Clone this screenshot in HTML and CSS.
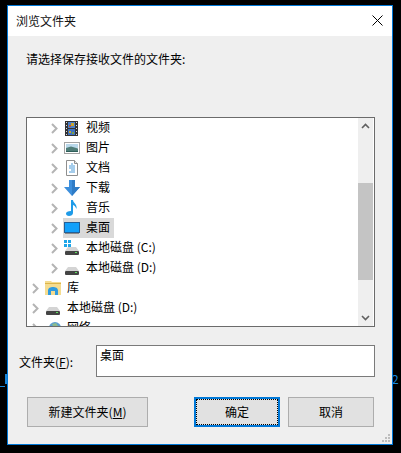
FILE: index.html
```html
<!DOCTYPE html>
<html lang="zh-CN">

<head>
    <meta charset="UTF-8">
    <title>浏览文件夹</title>
    <link rel="stylesheet" href="styles.css">
</head>

<body>
    <div class="edge-mark edge-left"></div>
    <div class="edge-mark edge-line"></div>
    <div class="edge-mark edge-right">2</div>

    <div class="dialog">
        <div class="titlebar">
            <span class="title">浏览文件夹</span>
            <svg class="close" width="11" height="11" viewBox="0 0 11 11">
                <path d="M0.5 0.5L10.5 10.5M10.5 0.5L0.5 10.5" stroke="#000" stroke-width="1" fill="none" />
            </svg>
        </div>

        <div class="content">
            <p class="prompt">请选择保存接收文件的文件夹:</p>

            <div class="tree-box">
                <div class="tree">
                    <div class="row indent">
                        <svg class="arrow" width="7" height="11" viewBox="0 0 7 11"><path d="M1 1L5.5 5.5L1 10" /></svg>
                        <svg class="icon" width="16" height="16" viewBox="0 0 16 16">
                            <rect x="1" y="1" width="13" height="15" fill="#333" />
                            <rect x="4" y="2" width="7" height="6" fill="#4a7fc8" />
                            <rect x="4" y="9" width="7" height="6" fill="#3f72c0" />
                            <rect x="7" y="3" width="3" height="3" fill="#c9a52f" />
                            <rect x="5" y="5" width="2" height="2" fill="#b5573a" />
                            <rect x="5" y="11" width="2" height="2" fill="#c9a52f" />
                            <rect x="8" y="12" width="2" height="2" fill="#7ba04a" />
                            <path d="M2 2.5h1M2 5.5h1M2 8.5h1M2 11.5h1M2 14.5h1M12 2.5h1M12 5.5h1M12 8.5h1M12 11.5h1M12 14.5h1" stroke="#ddd" stroke-width="1" />
                        </svg>
                        <span>视频</span>
                    </div>
                    <div class="row indent">
                        <svg class="arrow" width="7" height="11" viewBox="0 0 7 11"><path d="M1 1L5.5 5.5L1 10" /></svg>
                        <svg class="icon" width="16" height="16" viewBox="0 0 16 16">
                            <rect x="0.5" y="2.5" width="15" height="11" fill="#fff" stroke="#a3a3a3" />
                            <rect x="2" y="4" width="12" height="4" fill="#b9d8ea" />
                            <path d="M2 8L7 6.5L14 8.5V12H2Z" fill="#4f7d78" />
                            <rect x="2" y="11" width="12" height="1" fill="#2f5f5a" />
                        </svg>
                        <span>图片</span>
                    </div>
                    <div class="row indent">
                        <svg class="arrow" width="7" height="11" viewBox="0 0 7 11"><path d="M1 1L5.5 5.5L1 10" /></svg>
                        <svg class="icon" width="16" height="16" viewBox="0 0 16 16">
                            <path d="M2.5 0.5H10.5L13.5 3.5V15.500H2.5Z" fill="#fff" stroke="#8f8f8f" />
                            <path d="M10.5 0.5V3.5H13.5" fill="#e6e6e6" stroke="#8f8f8f" />
                            <path d="M7 4h2M5 6h6M5 8h6M7 10h4M5 12h6" stroke="#4d9bd8" stroke-width="1" />
                        </svg>
                        <span>文档</span>
                    </div>
                    <div class="row indent">
                        <svg class="arrow" width="7" height="11" viewBox="0 0 7 11"><path d="M1 1L5.5 5.5L1 10" /></svg>
                        <svg class="icon" width="16" height="16" viewBox="0 0 16 16">
                            <path d="M5 0H11V7H16L8 16L0 7H5Z" fill="#3d8fdc" />
                            <path d="M8 0H11V7H16L8 16Z" fill="#2f7cc6" />
                        </svg>
                        <span>下载</span>
                    </div>
                    <div class="row indent">
                        <svg class="arrow" width="7" height="11" viewBox="0 0 7 11"><path d="M1 1L5.5 5.5L1 10" /></svg>
                        <svg class="icon" width="16" height="16" viewBox="0 0 16 16">
                            <path d="M7 0H9C9 3 13.5 4 12.5 9C11.5 6.5 10.5 5.5 9 5V13C9 15 7 16 5 16C3 16 2 15 2 13.5C2 12 4 11 7 11Z" fill="#1e9be8" />
                        </svg>
                        <span>音乐</span>
                    </div>
                    <div class="row indent">
                        <svg class="arrow" width="7" height="11" viewBox="0 0 7 11"><path d="M1 1L5.5 5.5L1 10" /></svg>
                        <div class="selected">
                            <svg class="icon" width="16" height="16" viewBox="0 0 16 16">
                                <rect x="0" y="2" width="16" height="11" fill="#235f96" />
                                <rect x="1" y="3" width="14" height="9" fill="#12a0fa" />
                                <rect x="1" y="13" width="14" height="1" fill="#8a8a8a" />
                            </svg>
                            <span>桌面</span>
                        </div>
                    </div>
                    <div class="row indent">
                        <svg class="arrow" width="7" height="11" viewBox="0 0 7 11"><path d="M1 1L5.5 5.5L1 10" /></svg>
                        <svg class="icon" width="16" height="16" viewBox="0 0 16 16">
                            <rect x="0" y="0" width="3" height="3" fill="#1ea5e8" />
                            <rect x="4" y="0" width="3" height="3" fill="#1ea5e8" />
                            <rect x="0" y="4" width="3" height="3" fill="#1ea5e8" />
                            <rect x="4" y="4" width="3" height="3" fill="#1ea5e8" />
                            <path d="M1 11L4 7H12L15 11Z" fill="#d4d4d4" />
                            <rect x="1" y="11" width="14" height="4" rx="1" fill="#444" />
                            <rect x="11" y="12" width="2" height="1" fill="#5fe05f" />
                        </svg>
                        <span>本地磁盘 (C:)</span>
                    </div>
                    <div class="row indent">
                        <svg class="arrow" width="7" height="11" viewBox="0 0 7 11"><path d="M1 1L5.5 5.5L1 10" /></svg>
                        <svg class="icon" width="16" height="16" viewBox="0 0 16 16">
                            <path d="M1 11L4 7H12L15 11Z" fill="#d4d4d4" />
                            <rect x="1" y="11" width="14" height="4" rx="1" fill="#444" />
                            <rect x="11" y="12" width="2" height="1" fill="#5fe05f" />
                        </svg>
                        <span>本地磁盘 (D:)</span>
                    </div>
                    <div class="row">
                        <svg class="arrow" width="7" height="11" viewBox="0 0 7 11"><path d="M1 1L5.5 5.5L1 10" /></svg>
                        <svg class="icon" width="16" height="16" viewBox="0 0 16 16">
                            <path d="M0 1H6L7 2H16V15H0Z" fill="#f5dc90" />
                            <rect x="0" y="3" width="16" height="1" fill="#dcb44a" />
                            <path d="M3 15V10.5C3 8 5.5 7 8 7C10.5 7 13 8 13 10.5V15H10V11H6V15Z" fill="#2f9be0" />
                        </svg>
                        <span>库</span>
                    </div>
                    <div class="row">
                        <svg class="arrow" width="7" height="11" viewBox="0 0 7 11"><path d="M1 1L5.5 5.5L1 10" /></svg>
                        <svg class="icon" width="16" height="16" viewBox="0 0 16 16">
                            <path d="M1 11L4 7H12L15 11Z" fill="#d4d4d4" />
                            <rect x="1" y="11" width="14" height="4" rx="1" fill="#444" />
                            <rect x="11" y="12" width="2" height="1" fill="#5fe05f" />
                        </svg>
                        <span>本地磁盘 (D:)</span>
                    </div>
                    <div class="row">
                        <svg class="arrow" width="7" height="11" viewBox="0 0 7 11"><path d="M1 1L5.5 5.5L1 10" /></svg>
                        <svg class="icon" width="16" height="16" viewBox="0 0 16 16">
                            <circle cx="10" cy="8" r="6" fill="#5a9fd0" />
                            <path d="M7 4L11 3L13 6L9 8Z" fill="#8dbb8a" />
                        </svg>
                        <span>网络</span>
                    </div>
                </div>

                <div class="scrollbar">
                    <svg class="scroll-btn" width="9" height="6" viewBox="0 0 9 6"><path d="M1 5L4.5 1.5L8 5" /></svg>
                    <div class="track"><div class="thumb"></div></div>
                    <svg class="scroll-btn" width="9" height="6" viewBox="0 0 9 6"><path d="M1 1L4.5 4.5L8 1" /></svg>
                </div>
            </div>

            <div class="folder-row">
                <label class="folder-label">文件夹(<u>F</u>):</label>
                <div class="folder-input">桌面</div>
            </div>

            <div class="buttons">
                <button class="btn new-btn">新建文件夹(<u>M</u>)</button>
                <div class="right-btns">
                    <button class="btn ok-btn"><span class="focus-ring">确定</span></button>
                    <button class="btn cancel-btn">取消</button>
                </div>
            </div>
        </div>

        <svg class="grip" width="8" height="8" viewBox="0 0 8 8">
            <path d="M6 0h2v2H6zM3 3h2v2H3zM6 3h2v2H6zM0 6h2v2H0zM3 6h2v2H3zM6 6h2v2H6z" fill="#bdbdbd" />
        </svg>
    </div>
</body>

</html>
```

FILE: styles.css
```css
* {
    padding: 0;
    margin: 0;
    box-sizing: border-box;
}

html,
body {
    height: 100%;
    overflow: hidden;
}

body {
    position: relative;
    padding: 5px 8px 8px 7px;
    background: #000;
    font-family: "Noto Sans CJK SC", "Liberation Sans", sans-serif;
    font-size: 12px;
    color: #000;
}

.edge-mark {
    position: absolute;
}

.edge-left {
    left: 5px;
    top: 374px;
    width: 2px;
    height: 10px;
    background: #1a86d8;
}

.edge-line {
    left: 0;
    top: 386px;
    width: 5px;
    height: 1px;
    background: #1a86d8;
}

.edge-right {
    left: 392px;
    top: 372px;
    color: #1a86d8;
    font-size: 12px;
    line-height: 14px;
}

.dialog {
    position: relative;
    width: 386px;
    height: 440px;
    border: 1px solid #0078d7;
    background: #efefef;
    display: flex;
    flex-direction: column;
}

.titlebar {
    height: 30px;
    background: #fff;
    display: flex;
    justify-content: space-between;
    align-items: center;
    padding: 0 9px 0 8px;
    flex-shrink: 0;
}

.title {
    font-size: 12px;
    color: #111;
    padding-bottom: 2px;
}

.close {
    margin-bottom: 1px;
}

.content {
    flex: 1;
    padding: 0 17px 0 18px;
    display: flex;
    flex-direction: column;
}

.prompt {
    margin-top: 14px;
    line-height: 18px;
}

.tree-box {
    margin-top: 49px;
    height: 210px;
    width: 349px;
    border: 1px solid #6b6b6b;
    background: #fff;
    display: flex;
    overflow: hidden;
}

.tree {
    flex: 1;
    overflow: hidden;
}

.row {
    height: 20px;
    display: flex;
    align-items: center;
    padding-left: 5px;
    white-space: nowrap;
}

.row.indent {
    padding-left: 24px;
}

.row span {
    padding-bottom: 3px;
}

.arrow {
    fill: none;
    stroke: #b4b4b4;
    stroke-width: 2;
    margin-right: 6px;
    flex-shrink: 0;
}

.icon {
    margin-right: 6px;
    flex-shrink: 0;
}

.selected {
    display: flex;
    align-items: center;
    height: 20px;
    width: 51px;
    margin-left: -1px;
    padding-left: 1px;
    background: #d9d9d9;
}

.scrollbar {
    width: 15px;
    margin-right: 1px;
    background: #efefef;
    display: flex;
    flex-direction: column;
    align-items: center;
}

.scroll-btn {
    fill: none;
    stroke: #606060;
    stroke-width: 1.6;
    margin: 5px 0;
    flex-shrink: 0;
}

.track {
    flex: 1;
    width: 100%;
    padding-top: 49px;
}

.thumb {
    height: 97px;
    background: #c4c4c4;
}

.folder-row {
    margin-top: 18px;
    display: flex;
    align-items: center;
    margin-left: -7px;
}

.folder-label {
    width: 77px;
}

.folder-input {
    width: 279px;
    height: 32px;
    border: 1px solid #7a7a7a;
    background: #fff;
    padding: 0 3px;
    line-height: 18px;
}

.buttons {
    margin-top: 20px;
    margin-left: 1px;
    margin-right: 1px;
    display: flex;
    justify-content: space-between;
}

.right-btns {
    display: flex;
    gap: 8px;
}

.btn {
    height: 30px;
    border: 1px solid #adadad;
    background: #e1e1e1;
    font-family: inherit;
    font-size: 12px;
    color: #000;
    padding-bottom: 2px;
}

.new-btn {
    width: 121px;
}

.ok-btn {
    width: 86px;
    border: 2px solid #0078d7;
    padding: 0;
}

.focus-ring {
    display: flex;
    align-items: center;
    justify-content: center;
    height: 100%;
    border: 1px dotted #000;
    padding-bottom: 2px;
}

.cancel-btn {
    width: 86px;
}

.grip {
    position: absolute;
    right: 2px;
    bottom: 2px;
}
```
